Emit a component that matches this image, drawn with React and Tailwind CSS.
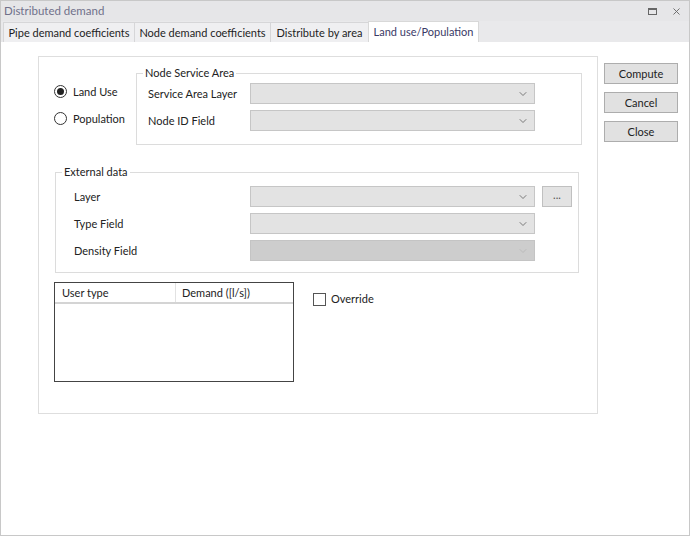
import { ChevronDown, X } from "lucide-react";

const tabs = [
  { id: "pipe", label: "Pipe demand coefficients", w: "w-[131px]" },
  { id: "node", label: "Node demand coefficients", w: "w-[136px]" },
  { id: "area", label: "Distribute by area", w: "w-[98px]" },
  { id: "land", label: "Land use/Population", w: "w-[111px]" },
];

const Combo = ({ disabled }) => (
  <div
    className={`w-[285px] h-[21px] border flex items-center justify-end pr-[5px] ${
      disabled
        ? "bg-[#cdcdcd] border-[#c4c4c4] text-[#b4b4b4]"
        : "bg-[#e3e3e3] border-[#c6c6c6] text-[#555]"
    }`}
  >
    <ChevronDown className="w-[12px] h-[12px]" strokeWidth={1.5} />
  </div>
);

const GroupBox = ({ title, className, children }) => (
  <div className={`relative border border-[#dcdcdc] ${className}`}>
    <span className="absolute left-[6px] top-[-8px] bg-white px-[2px] leading-[14px] text-[#222]">
      {title}
    </span>
    {children}
  </div>
);

const Radio = ({ checked, label }) => (
  <div className="h-[21px] flex items-center gap-[6px]">
    <div className="w-[13px] h-[13px] rounded-full border border-[#333] bg-white flex items-center justify-center">
      {checked && <div className="w-[7px] h-[7px] rounded-full bg-[#222]" />}
    </div>
    <span className="text-[#222]">{label}</span>
  </div>
);

const Button = ({ label }) => (
  <button className="w-[74px] h-[21px] bg-[#e1e1e1] border border-[#adadad] text-[#222] leading-none">
    {label}
  </button>
);

export default function App() {
  return (
    <div className="w-[690px] h-[536px] bg-white border border-[#c8c8c8] flex flex-col text-[11px] leading-[14px] whitespace-nowrap font-['Lato','Noto_Sans',sans-serif] overflow-hidden">
      {/* Title bar */}
      <div className="h-[20px] bg-[#e6e6e8] flex items-center justify-between pl-[3px] pr-[7px] shrink-0">
        <span className="text-[#70708a] text-[11.5px]">Distributed demand</span>
        <div className="flex items-center gap-[14px] text-[#666]">
          <div className="w-[9px] h-[7px] border border-[#666] border-t-2" />
          <X className="w-[11px] h-[11px]" strokeWidth={2} />
        </div>
      </div>

      {/* Tabs */}
      <div className="h-[21px] bg-[#e9e9eb] flex items-end pl-[2px] shrink-0">
        {tabs.map((tab) =>
          tab.id === "land" ? (
            <div
              key={tab.id}
              className={`${tab.w} h-[21px] bg-white border-t border-x border-[#d8d8d8] flex items-center justify-center text-[#3a3a66]`}
            >
              {tab.label}
            </div>
          ) : (
            <div
              key={tab.id}
              className={`${tab.w} h-[20px] bg-[#efeff1] border-l border-t border-[#d6d6d8] flex items-center justify-center text-[#1e1e1e]`}
            >
              {tab.label}
            </div>
          )
        )}
      </div>

      {/* Content */}
      <div className="flex-1 flex items-start pl-[37px] pt-[14px]">
        <div className="w-[560px] h-[358px] border border-[#dedede] flex flex-col">
          {/* Top row */}
          <div className="flex mt-[16px]">
            <div className="w-[97px] pl-[15px] pt-[8px] flex flex-col gap-[6px]">
              <Radio checked label="Land Use" />
              <Radio label="Population" />
            </div>
            <GroupBox title="Node Service Area" className="w-[446px] pt-[9px] pb-[13px] pl-[11px]">
              <div className="flex flex-col gap-[6px]">
                <div className="flex items-center">
                  <span className="w-[102px] text-[#222]">Service Area Layer</span>
                  <Combo />
                </div>
                <div className="flex items-center">
                  <span className="w-[102px] text-[#222]">Node ID Field</span>
                  <Combo />
                </div>
              </div>
            </GroupBox>
          </div>

          {/* External data */}
          <GroupBox title="External data" className="ml-[16px] mt-[27px] w-[524px] pt-[13px] pb-[11px] pl-[18px]">
            <div className="flex flex-col gap-[6px]">
              <div className="flex items-center">
                <span className="w-[176px] text-[#222]">Layer</span>
                <Combo />
                <button className="ml-[7px] w-[30px] h-[21px] bg-[#e3e3e3] border border-[#c0c0c0] text-[#555] leading-none pb-[4px]">
                  ...
                </button>
              </div>
              <div className="flex items-center">
                <span className="w-[176px] text-[#222]">Type Field</span>
                <Combo />
              </div>
              <div className="flex items-center">
                <span className="w-[176px] text-[#222]">Density Field</span>
                <Combo disabled />
              </div>
            </div>
          </GroupBox>

          {/* Table + override */}
          <div className="flex items-start mt-[9px] ml-[15px]">
            <div className="w-[240px] h-[100px] border border-[#444] bg-white flex flex-col">
              <div className="h-[21px] flex border-b-2 border-[#d4d4d4] text-[#222]">
                <div className="w-[121px] border-r border-[#e2e2e2] pl-[7px] flex items-center">User type</div>
                <div className="flex-1 pl-[6px] flex items-center">Demand ([l/s])</div>
              </div>
            </div>
            <div className="ml-[19px] mt-[10px] flex items-center gap-[5px]">
              <div className="w-[13px] h-[13px] border border-[#555] bg-white" />
              <span className="text-[#222]">Override</span>
            </div>
          </div>
        </div>

        {/* Buttons */}
        <div className="ml-[6px] mt-[7px] flex flex-col gap-[8px]">
          <Button label="Compute" />
          <Button label="Cancel" />
          <Button label="Close" />
        </div>
      </div>
    </div>
  );
}
